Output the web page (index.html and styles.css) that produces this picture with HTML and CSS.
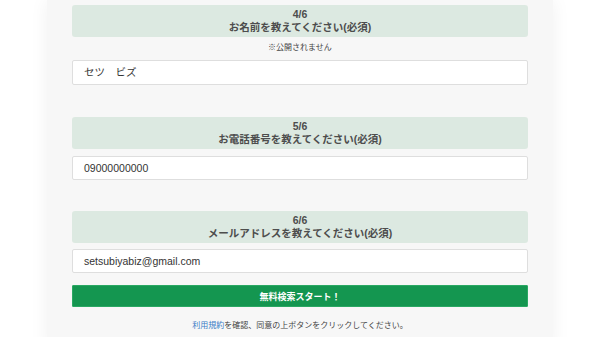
FILE: index.html
```html
<!DOCTYPE html>
<html lang="ja">

<head>
    <meta charset="UTF-8">
    <title>無料検索</title>
    <link rel="stylesheet" href="styles.css">
</head>

<body>
    <main class="panel">
        <section class="step">
            <h2 class="step_title">4/6<br>お名前を教えてください(必須)</h2>
            <p class="note">※公開されません</p>
            <div class="field">セツ　ビズ</div>
        </section>

        <section class="step">
            <h2 class="step_title">5/6<br>お電話番号を教えてください(必須)</h2>
            <div class="field">09000000000</div>
        </section>

        <section class="step">
            <h2 class="step_title">6/6<br>メールアドレスを教えてください(必須)</h2>
            <div class="field">setsubiyabiz@gmail.com</div>
        </section>

        <button class="start">無料検索スタート！</button>
        <p class="terms"><a href="#">利用規約</a>を確認、同意の上ボタンをクリックしてください。</p>
    </main>
</body>

</html>
```

FILE: styles.css
```css
body {
    margin: 0;
    background: #ffffff;
    font-family: "Liberation Sans", "Noto Sans CJK JP", sans-serif;
    color: #333;
}

.panel {
    width: 456px;
    margin: 0 auto;
    padding: 5px 25px 20px;
    background: #f7f7f7;
    box-shadow: 0 0 18px rgba(0, 0, 0, 0.06);
}

.step {
    margin-bottom: 32px;
}

.step:nth-of-type(2) {
    margin-bottom: 31px;
}

.step:nth-of-type(3) {
    margin-bottom: 12px;
}

.step_title {
    margin: 0 0 7px;
    height: 32px;
    box-sizing: border-box;
    padding-top: 3px;
    background: #dce9e1;
    border-radius: 3px;
    text-align: center;
    font-size: 10.5px;
    line-height: 13px;
    font-weight: bold;
    color: #4d4d4d;
}

.step:nth-of-type(3) .step_title {
    margin-bottom: 6px;
}

.note {
    margin: -7px 0 0;
    height: 23px;
    line-height: 22px;
    text-align: center;
    font-size: 8px;
    color: #444;
}

.field {
    height: 24px;
    box-sizing: border-box;
    padding-left: 11px;
    background: #fff;
    border: 1px solid #dedede;
    border-radius: 2px;
    font-size: 10.5px;
    line-height: 22px;
    color: #333;
}

.step:first-of-type .field {
    height: 25px;
    line-height: 23px;
}

.start {
    display: block;
    width: 100%;
    height: 22px;
    margin: 0;
    padding: 0;
    background: #149650;
    border: 1px solid #2aa863;
    border-radius: 1px;
    color: #fff;
    font-family: inherit;
    font-size: 9px;
    font-weight: bold;
}

.terms {
    margin: 12px 0 0;
    text-align: center;
    font-size: 8px;
    color: #444;
}

.terms a {
    color: #3a7cc6;
    text-decoration: none;
}
```
